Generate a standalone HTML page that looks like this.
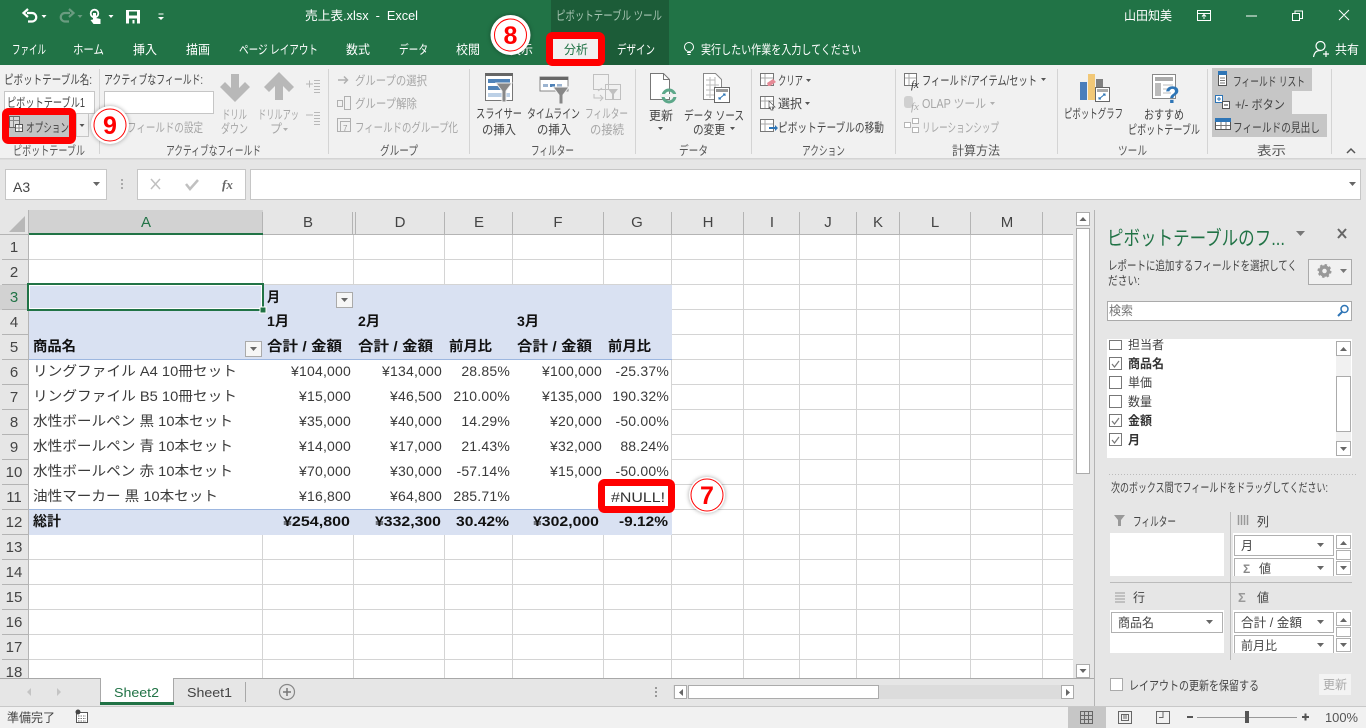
<!DOCTYPE html>
<html lang="ja"><head><meta charset="utf-8"><title>売上表.xlsx - Excel</title>
<style>
html,body{margin:0;padding:0;background:#e6e6e6;overflow:hidden;width:1366px;height:728px}
svg{display:block;position:absolute;left:0;top:0}
text{font-family:"Liberation Sans","Noto Sans CJK JP",sans-serif;font-size:12.5px;fill:#444;white-space:pre}
.w text{fill:#fff}.g text{fill:#a6a6a6}.d text{fill:#3a3a3a;font-size:14px}.n text{letter-spacing:.2px}.b text{fill:#111;font-size:14px;font-weight:bold}
.l text{fill:#555}.h text{fill:#444;font-size:15px;text-anchor:middle}
</style></head><body>
<svg width="1366" height="728" viewBox="0 0 1366 728">
<rect width="1366" height="728" fill="#e6e6e6"/>
<!-- title bar -->
<rect width="1366" height="65" fill="#217346"/>
<rect x="551" width="118" height="65" fill="#1c5c38"/>
<g fill="none" stroke="#fff" stroke-width="2.200">
<path d="M27 13h5a4 4 0 0 1 0 8.500h-4"/><path d="M28 9l-4.500 4 4.500 4"/>
<path d="M70 13h-5a4 4 0 0 0 0 8.500h4M69 9l4.500 4-4.500 4" stroke="#6a9c80"/>
<path d="M1197.500 10.500h13v10h-13zM1197.500 13.500h13M1204 19v-4M1202 16.500l2-2 2 2" stroke-width="1"/>
<path d="M1246 16h11M1292.500 13.500h7v7h-7zM1295 13.500v-2.500h7.500v7.500h-3M1339 10l10 10M1349 10l-10 10" stroke-width="1"/>
<circle cx="1320.500" cy="46" r="4.500" stroke-width="1.200"/><path d="M1313.500 57c1-5 3-6.500 7-6.500M1323 54h6M1326 51v6" stroke-width="1.200"/>
<circle cx="689" cy="47" r="4.500" stroke-width="1"/><path d="M687 52.500h4M687.500 54.500h3" stroke-width="1"/>
<circle cx="94.500" cy="13.500" r="3.800" stroke-width="1.800"/>
</g>
<path d="M93 13h3v5l4.500 1v5h-7l-3-4 2.500-.5z" fill="#fff"/>
<path d="M126 10h14v13.500h-14z" fill="#fff"/><path d="M129 11.500h8v4h-8zM129 18.500h8v5h-8z" fill="#217346"/><rect x="132.500" y="20" width="2" height="3.500" fill="#fff"/>
<g fill="#fff"><path d="M41.500 15h5l-2.500 3zM108.500 15h5l-2.500 3zM158 17h6l-3 3zM158.500 13.500h5v1h-5z"/></g>
<path d="M77.500 15h5l-2.500 3z" fill="#6a9c80"/>
<g class="w">
<text x="305" y="20" textLength="113" lengthAdjust="spacingAndGlyphs">売上表.xlsx  -  Excel</text>
<text x="1124" y="20" textLength="48" lengthAdjust="spacingAndGlyphs">山田知美</text>
<text x="12" y="54" textLength="34" lengthAdjust="spacingAndGlyphs">ファイル</text>
<text x="73" y="54" textLength="31" lengthAdjust="spacingAndGlyphs">ホーム</text>
<text x="133" y="54" textLength="24" lengthAdjust="spacingAndGlyphs">挿入</text>
<text x="186" y="54" textLength="24" lengthAdjust="spacingAndGlyphs">描画</text>
<text x="239" y="54" textLength="79" lengthAdjust="spacingAndGlyphs">ページ レイアウト</text>
<text x="346" y="54" textLength="24" lengthAdjust="spacingAndGlyphs">数式</text>
<text x="399" y="54" textLength="29" lengthAdjust="spacingAndGlyphs">データ</text>
<text x="456" y="54" textLength="24" lengthAdjust="spacingAndGlyphs">校閲</text>
<text x="509" y="54" textLength="24" lengthAdjust="spacingAndGlyphs">表示</text>
<text x="617" y="54" textLength="38" lengthAdjust="spacingAndGlyphs">デザイン</text>
<text x="701" y="54" textLength="160" lengthAdjust="spacingAndGlyphs">実行したい作業を入力してください</text>
<text x="1335" y="54" textLength="24" lengthAdjust="spacingAndGlyphs">共有</text>
</g>
<text x="556" y="20" textLength="106" lengthAdjust="spacingAndGlyphs" style="fill:#a9c6b4">ピボットテーブル ツール</text>
<!-- ribbon -->
<rect y="65" width="1366" height="93" fill="#f1f1f1"/>
<rect y="158" width="1366" height="1.500" fill="#d4d4d4"/>
<g fill="#d4d4d4"><rect x="99" y="69" width="1" height="85"/><rect x="328" y="69" width="1" height="85"/><rect x="469" y="69" width="1" height="85"/><rect x="635" y="69" width="1" height="85"/><rect x="751" y="69" width="1" height="85"/><rect x="895" y="69" width="1" height="85"/><rect x="1057" y="69" width="1" height="85"/><rect x="1207" y="69" width="1" height="85"/><rect x="1331" y="69" width="1" height="85"/></g>
<g class="l">
<text x="13" y="155" textLength="72" lengthAdjust="spacingAndGlyphs">ピボットテーブル</text>
<text x="166" y="155" textLength="95" lengthAdjust="spacingAndGlyphs">アクティブなフィールド</text>
<text x="380" y="155" textLength="38" lengthAdjust="spacingAndGlyphs">グループ</text>
<text x="531" y="155" textLength="43" lengthAdjust="spacingAndGlyphs">フィルター</text>
<text x="679" y="155" textLength="29" lengthAdjust="spacingAndGlyphs">データ</text>
<text x="802" y="155" textLength="43" lengthAdjust="spacingAndGlyphs">アクション</text>
<text x="952" y="155" textLength="48" lengthAdjust="spacingAndGlyphs">計算方法</text>
<text x="1118" y="155" textLength="29" lengthAdjust="spacingAndGlyphs">ツール</text>
<text x="1257" y="155" textLength="29" lengthAdjust="spacingAndGlyphs">表示</text>
</g>
<rect x="4.500" y="91.500" width="90" height="22" fill="#fff" stroke="#c6c6c6"/>
<rect x="104.500" y="91.500" width="109" height="22" fill="#fff" stroke="#c6c6c6"/>
<rect x="76.500" y="113.500" width="12" height="23" fill="#f1f1f1" stroke="#c6c6c6"/>
<path d="M79.500 124h5l-2.500 3z" fill="#555"/>
<text x="4" y="84" textLength="88" lengthAdjust="spacingAndGlyphs">ピボットテーブル名:</text>
<text x="104" y="84" textLength="99" lengthAdjust="spacingAndGlyphs">アクティブなフィールド:</text>
<text x="7" y="107" textLength="78" lengthAdjust="spacingAndGlyphs">ピボットテーブル1</text>
<!-- drill arrows -->
<g fill="#b8b8b8">
<path d="M231 74h8v14l6-6 5 5-15 15-15-15 5-5 6 6z"/>
<path d="M275 100h8v-14l6 6 5-5-15-15-15 15 5 5 6-6z"/>
</g>
<g fill="none" stroke="#b8b8b8" stroke-width="1"><path d="M306 84h7M309.500 80.500v7M314 80.500h6M314 83.500h6M314 86.500h6M314 89.500h6M314 92.500h6M306 115h7M314 112.500h6M314 115.500h6M314 118.500h6M314 121.500h6M314 124.500h6"/></g>
<g class="g">
<text x="127" y="132" textLength="76" lengthAdjust="spacingAndGlyphs">フィールドの設定</text>
<text x="222" y="119" textLength="25" lengthAdjust="spacingAndGlyphs">ドリル</text>
<text x="221" y="133" textLength="27" lengthAdjust="spacingAndGlyphs">ダウン</text>
<text x="258" y="119" textLength="41" lengthAdjust="spacingAndGlyphs">ドリルアッ</text>
<text x="270" y="133" textLength="12" lengthAdjust="spacingAndGlyphs">プ</text>
<text x="355" y="85" textLength="72" lengthAdjust="spacingAndGlyphs">グループの選択</text>
<text x="355" y="108" textLength="62" lengthAdjust="spacingAndGlyphs">グループ解除</text>
<text x="355" y="132" textLength="103" lengthAdjust="spacingAndGlyphs">フィールドのグループ化</text>
<text x="585" y="118" textLength="43" lengthAdjust="spacingAndGlyphs">フィルター</text>
<text x="590" y="134" textLength="34" lengthAdjust="spacingAndGlyphs">の接続</text>
<text x="922" y="108" textLength="64" lengthAdjust="spacingAndGlyphs">OLAP ツール</text>
<text x="922" y="132" textLength="77" lengthAdjust="spacingAndGlyphs">リレーションシップ</text>
</g>
<path d="M283 128h5l-2.500 3zM990 102h5l-2.500 3z" fill="#b0b0b0"/>
<!-- group icons -->
<g fill="none" stroke="#b0b0b0" stroke-width="1">
<path d="M338 80h9M344 76.500l3.500 3.500-3.500 3.500" stroke-width="1.500"/>
<rect x="337.500" y="100.500" width="5" height="6"/><rect x="344.500" y="96.500" width="6" height="13"/>
<rect x="337.500" y="118.500" width="13" height="13"/><rect x="340.500" y="121.500" width="10" height="10"/>
</g>
<text x="343" y="131" style="font-size:8px;fill:#999">7</text>
<!-- filter group -->
<text x="476" y="118" textLength="46" lengthAdjust="spacingAndGlyphs">スライサー</text>
<text x="482" y="134" textLength="34" lengthAdjust="spacingAndGlyphs">の挿入</text>
<text x="527" y="118" textLength="53" lengthAdjust="spacingAndGlyphs">タイムライン</text>
<text x="537" y="134" textLength="34" lengthAdjust="spacingAndGlyphs">の挿入</text>
<rect x="485.500" y="73.500" width="27" height="27" fill="#fff" stroke="#777"/><rect x="485" y="73" width="28" height="3" fill="#666"/>
<rect x="488" y="79" width="22" height="4" fill="#5083b8"/><rect x="488" y="86" width="14" height="4" fill="#5083b8"/><rect x="488" y="93" width="22" height="4" fill="#bcd0e6"/>
<path d="M496 83h16l-6 8v11h-4v-11z" fill="#888" stroke="#f1f1f1"/>
<rect x="540" y="77" width="28" height="14" fill="#fff" stroke="#888"/><rect x="540" y="77" width="28" height="3" fill="#666"/>
<rect x="543" y="84" width="5" height="3" fill="#9cb4d0"/><rect x="550" y="84" width="5" height="3" fill="#5083b8"/><rect x="557" y="84" width="5" height="3" fill="#9cb4d0"/>
<path d="M553 87h16l-6 8v9h-4v-9z" fill="#888" stroke="#f1f1f1"/>
<g fill="none" stroke="#c0c0c0"><rect x="593.500" y="74.500" width="15" height="15"/><rect x="605.500" y="84.500" width="15" height="15"/><path d="M594 94v4h8M600 95l3 3-3 3M598 91l4-3"/></g>
<path d="M608 89h10l-4 5v5h-2v-5z" fill="#c0c0c0"/>
<!-- data group -->
<path d="M650.500 73.500h13l6 6v20h-19z" fill="#fff" stroke="#777"/><path d="M663.500 73.500v6h6" fill="none" stroke="#777"/>
<circle cx="669" cy="96" r="6" fill="none" stroke="#5da88a" stroke-width="3"/><rect x="660" y="94" width="18" height="3" fill="#f1f1f1"/>
<path d="M703.500 73.500h12l6 6v20h-18z" fill="#fff" stroke="#888"/>
<path d="M706 80h9M706 85h13M706 90h13M706 95h13M710 77v21M715 77v21" stroke="#bbb" fill="none"/>
<rect x="714.500" y="87.500" width="15" height="15" fill="#fff" stroke="#666"/><rect x="716" y="89" width="12" height="3" fill="#999"/>
<path d="M719 99l6-5M723 94h2v2M719 97v2h2" stroke="#2e75b6" fill="none"/>
<text x="649" y="120" textLength="24" lengthAdjust="spacingAndGlyphs">更新</text>
<text x="684" y="120" textLength="60" lengthAdjust="spacingAndGlyphs">データ ソース</text>
<text x="693" y="134" textLength="32" lengthAdjust="spacingAndGlyphs">の変更</text>
<path d="M658 127h5l-2.500 3zM730 127h5l-2.500 3zM806 79h5l-2.500 3zM805 102h5l-2.500 3zM1041 78h5l-2.500 3z" fill="#555"/>
<!-- action -->
<g fill="#fff" stroke="#777"><rect x="760.500" y="73.500" width="13" height="12"/><rect x="760.500" y="96.500" width="13" height="12"/><rect x="760.500" y="119.500" width="13" height="12"/></g>
<path d="M761 78h12M765 74v11M761 101h12M765 97v11M761 124h12M765 120v11" stroke="#aaa"/>
<path d="M767 83l6-4 3 3-6 4h-2z" fill="#e58a96"/><path d="M769 101l6 6-3 0 1 3-2 0-1-3-1 2z" fill="#fff" stroke="#555" stroke-width=".7"/>
<path d="M769 127h6v-2l3 3-3 3v-2h-6z" fill="#2e75b6"/>
<text x="778" y="85" textLength="25" lengthAdjust="spacingAndGlyphs">クリア</text>
<text x="778" y="108" textLength="24" lengthAdjust="spacingAndGlyphs">選択</text>
<text x="778" y="132" textLength="106" lengthAdjust="spacingAndGlyphs">ピボットテーブルの移動</text>
<!-- calc -->
<rect x="904.500" y="73.500" width="12" height="12" fill="#fff" stroke="#777"/><path d="M905 78h11M909 74v11" stroke="#aaa"/>
<text x="911" y="88" style="font-family:'Liberation Serif',serif;font-style:italic;font-size:11px;fill:#333">fx</text>
<rect x="904" y="96" width="9" height="12" rx="3" fill="#d0d0d0"/>
<text x="911" y="110" style="font-family:'Liberation Serif',serif;font-style:italic;font-size:11px;fill:#aaa">fx</text>
<g fill="#fff" stroke="#b5b5b5"><rect x="904.500" y="122.500" width="6" height="5"/><rect x="912.500" y="118.500" width="6" height="5"/><rect x="912.500" y="127.500" width="6" height="5"/></g>
<text x="922" y="85" textLength="115" lengthAdjust="spacingAndGlyphs">フィールド/アイテム/セット</text>
<!-- tools -->
<rect x="1080" y="82" width="7" height="18" fill="#4a7ebb"/><rect x="1088" y="74" width="7" height="26" fill="#f2c877"/><rect x="1096" y="79" width="7" height="8" fill="#808080"/>
<rect x="1095.500" y="87.500" width="14" height="14" fill="#fff" stroke="#666"/><rect x="1097" y="89" width="11" height="3" fill="#aaa"/><path d="M1099 99l6-5M1103 94h2v2M1099 97v2h2" stroke="#2e75b6" fill="none"/>
<rect x="1152.500" y="74.500" width="23" height="24" fill="#fff" stroke="#888"/><rect x="1155" y="77" width="18" height="4" fill="#aaa"/><rect x="1155" y="83" width="6" height="13" fill="#bbb"/><path d="M1163 85h10M1163 89h8M1163 93h8" stroke="#bbb"/>
<text x="1165" y="103" style="font-size:24px;font-weight:bold;fill:#2e75b6">?</text>
<text x="1064" y="118" textLength="59" lengthAdjust="spacingAndGlyphs">ピボットグラフ</text>
<text x="1144" y="119" textLength="40" lengthAdjust="spacingAndGlyphs">おすすめ</text>
<text x="1128" y="134" textLength="72" lengthAdjust="spacingAndGlyphs">ピボットテーブル</text>
<!-- show -->
<rect x="1212" y="68" width="100" height="23" fill="#c6c6c6"/><rect x="1212" y="91" width="80" height="23" fill="#c6c6c6"/><rect x="1212" y="114" width="115" height="23" fill="#c6c6c6"/>
<rect x="1218.500" y="72.500" width="8" height="13" fill="#fff" stroke="#555"/><rect x="1218" y="71" width="9" height="4" fill="#2e75b6"/><path d="M1220 78h5M1220 80.500h5M1220 83h5" stroke="#777"/>
<rect x="1215.500" y="95.500" width="7" height="7" fill="#fff" stroke="#2e75b6"/><path d="M1217 99h4M1219 97v4" stroke="#2e75b6"/><rect x="1222.500" y="101.500" width="7" height="7" fill="#fff" stroke="#555"/><path d="M1224 105h4" stroke="#333"/>
<rect x="1215.500" y="118.500" width="15" height="11" fill="#fff" stroke="#555"/><rect x="1215" y="118" width="16" height="4" fill="#2e75b6"/><path d="M1216 125.500h14M1221 122v7M1226 122v7" stroke="#777"/>
<text x="1233" y="86" textLength="72" lengthAdjust="spacingAndGlyphs">フィールド リスト</text>
<text x="1235" y="109" textLength="50" lengthAdjust="spacingAndGlyphs">+/- ボタン</text>
<text x="1233" y="132" textLength="87" lengthAdjust="spacingAndGlyphs">フィールドの見出し</text>
<path d="M1347 153l4-4 4 4" fill="none" stroke="#555" stroke-width="1.500"/>
<!-- formula bar -->
<g fill="#fff" stroke="#c6c6c6"><rect x="5.500" y="169.500" width="101" height="30"/><rect x="137.500" y="169.500" width="108" height="30"/><rect x="250.500" y="169.500" width="1110" height="30"/></g>
<text x="13" y="192" style="font-size:14px">A3</text>
<path d="M93 182h7l-3.500 4zM1349 182h7l-3.500 4z" fill="#666"/>
<g fill="#aaa"><rect x="121" y="179" width="2" height="2"/><rect x="121" y="183" width="2" height="2"/><rect x="121" y="187" width="2" height="2"/></g>
<path d="M151 179l9 10M160 179l-9 10" stroke="#c0c0c0" stroke-width="1.500"/><path d="M186 184l4 5 8-9" stroke="#c0c0c0" stroke-width="2.500" fill="none"/>
<text x="222" y="189" style="font-family:'Liberation Serif',serif;font-style:italic;font-weight:bold;font-size:13px;fill:#666">fx</text>
<!-- sheet -->
<rect x="29" y="235" width="1044" height="443" fill="#fff"/>
<path fill="none" stroke="#d4d4d4" stroke-width="1" d="M29 259.500H1073M29 284.500H1073M672 309.500H1073M672 334.500H1073M672 359.500H1073M672 384.500H1073M672 409.500H1073M672 434.500H1073M672 459.500H1073M672 484.500H1073M672 509.500H1073M29 534.500H1073M29 559.500H1073M29 584.500H1073M29 609.500H1073M29 634.500H1073M29 659.500H1073
M262.500 235V285M353.500 235V285M444.500 235V285M512.500 235V285M603.500 235V285M671.500 235V678M743.500 235V678M799.500 235V678M856.500 235V678M899.500 235V678M970.500 235V678M1042.500 235V678
M262.500 535V678M353.500 535V678M444.500 535V678M512.500 535V678M603.500 535V678"/>
<rect x="29" y="285" width="643" height="75" fill="#d9e1f2"/><rect x="29" y="510" width="643" height="25" fill="#d9e1f2"/>
<path d="M29 359.500h643M29 509.500h643" stroke="#9db7e0" stroke-width="1"/>
<!-- headers -->
<rect x="0" y="210" width="1073" height="25" fill="#e6e6e6"/><rect x="0" y="235" width="29" height="443" fill="#e6e6e6"/>
<rect x="29" y="210" width="234" height="24" fill="#d2d2d2"/><rect x="0" y="285" width="28" height="25" fill="#d2d2d2"/>
<path d="M25 216v16h-16z" fill="#b8b8b8"/>
<path fill="none" stroke="#b4b4b4" d="M28.500 210V678M262.500 212V234M352.500 212V234M355.500 212V234M444.500 212V234M512.500 212V234M603.500 212V234M671.500 212V234M743.500 212V234M799.500 212V234M856.500 212V234M899.500 212V234M970.500 212V234M1042.500 212V234M0 234.500H28M263 234.500H1073M2 259.500H28M2 284.500H28M2 309.500H28M2 334.500H28M2 359.500H28M2 384.500H28M2 409.500H28M2 434.500H28M2 459.500H28M2 484.500H28M2 509.500H28M2 534.500H28M2 559.500H28M2 584.500H28M2 609.500H28M2 634.500H28M2 659.500H28"/>
<rect x="29" y="233" width="234" height="2" fill="#217346"/>
<g class="h">
<text x="146" y="227" style="fill:#217346">A</text><text x="308" y="227">B</text><text x="400" y="227">D</text><text x="479" y="227">E</text><text x="558" y="227">F</text><text x="637" y="227">G</text><text x="708" y="227">H</text><text x="772" y="227">I</text><text x="828" y="227">J</text><text x="878" y="227">K</text><text x="935" y="227">L</text><text x="1007" y="227">M</text>
<text x="14" y="252">1</text><text x="14" y="277">2</text><text x="14" y="302" style="fill:#217346">3</text><text x="14" y="327">4</text><text x="14" y="352">5</text><text x="14" y="377">6</text><text x="14" y="402">7</text><text x="14" y="427">8</text><text x="14" y="452">9</text><text x="14" y="477">10</text><text x="14" y="502">11</text><text x="14" y="527">12</text><text x="14" y="552">13</text><text x="14" y="577">14</text><text x="14" y="602">15</text><text x="14" y="627">16</text><text x="14" y="652">17</text><text x="14" y="677">18</text>
</g>
<!-- selection -->
<rect x="28" y="284" width="235" height="26" fill="none" stroke="#217346" stroke-width="2"/>
<rect x="29.500" y="285.500" width="232" height="23" fill="none" stroke="#fff"/>
<rect x="260" y="307" width="6" height="6" fill="#217346" stroke="#fff"/>
<!-- pivot text -->
<g class="b">
<text x="267" y="302" textLength="13" lengthAdjust="spacingAndGlyphs">月</text>
<text x="267" y="326" textLength="22" lengthAdjust="spacingAndGlyphs">1月</text>
<text x="358" y="326" textLength="22" lengthAdjust="spacingAndGlyphs">2月</text>
<text x="517" y="326" textLength="22" lengthAdjust="spacingAndGlyphs">3月</text>
<text x="33" y="351" textLength="43" lengthAdjust="spacingAndGlyphs">商品名</text>
<text x="267" y="351" textLength="75" lengthAdjust="spacingAndGlyphs">合計 / 金額</text>
<text x="358" y="351" textLength="75" lengthAdjust="spacingAndGlyphs">合計 / 金額</text>
<text x="449" y="351" textLength="43" lengthAdjust="spacingAndGlyphs">前月比</text>
<text x="517" y="351" textLength="75" lengthAdjust="spacingAndGlyphs">合計 / 金額</text>
<text x="608" y="351" textLength="43" lengthAdjust="spacingAndGlyphs">前月比</text>
<text x="33" y="526" textLength="28" lengthAdjust="spacingAndGlyphs">総計</text>
<text x="283" y="526" textLength="67" lengthAdjust="spacingAndGlyphs">¥254,800</text>
<text x="375" y="526" textLength="66" lengthAdjust="spacingAndGlyphs">¥332,300</text>
<text x="456" y="526" textLength="53" lengthAdjust="spacingAndGlyphs">30.42%</text>
<text x="533" y="526" textLength="66" lengthAdjust="spacingAndGlyphs">¥302,000</text>
<text x="619" y="526" textLength="49" lengthAdjust="spacingAndGlyphs">-9.12%</text>
</g>
<g fill="#f6f6f6" stroke="#aaa"><rect x="336.500" y="292.500" width="16" height="15"/><rect x="245.500" y="341.500" width="16" height="15"/></g>
<path d="M341 298h7l-3.500 4zM250 347h7l-3.500 4z" fill="#666"/>
<g class="d">
<text x="33" y="376" textLength="204" lengthAdjust="spacingAndGlyphs">リングファイル A4 10冊セット</text>
<text x="33" y="401" textLength="204" lengthAdjust="spacingAndGlyphs">リングファイル B5 10冊セット</text>
<text x="33" y="426" textLength="200" lengthAdjust="spacingAndGlyphs">水性ボールペン 黒 10本セット</text>
<text x="33" y="451" textLength="200" lengthAdjust="spacingAndGlyphs">水性ボールペン 青 10本セット</text>
<text x="33" y="476" textLength="200" lengthAdjust="spacingAndGlyphs">水性ボールペン 赤 10本セット</text>
<text x="33" y="501" textLength="185" lengthAdjust="spacingAndGlyphs">油性マーカー 黒 10本セット</text>
</g>
<g class="d n" text-anchor="end">
<text x="351" y="376">¥104,000</text><text x="351" y="401">¥15,000</text><text x="351" y="426">¥35,000</text><text x="351" y="451">¥14,000</text><text x="351" y="476">¥70,000</text><text x="351" y="501">¥16,800</text>
<text x="442" y="376">¥134,000</text><text x="442" y="401">¥46,500</text><text x="442" y="426">¥40,000</text><text x="442" y="451">¥17,000</text><text x="442" y="476">¥30,000</text><text x="442" y="501">¥64,800</text>
<text x="510" y="376">28.85%</text><text x="510" y="401">210.00%</text><text x="510" y="426">14.29%</text><text x="510" y="451">21.43%</text><text x="510" y="476">-57.14%</text><text x="510" y="501">285.71%</text>
<text x="602" y="376">¥100,000</text><text x="602" y="401">¥135,000</text><text x="602" y="426">¥20,000</text><text x="602" y="451">¥32,000</text><text x="602" y="476">¥15,000</text>
<text x="669" y="376">-25.37%</text><text x="669" y="401">190.32%</text><text x="669" y="426">-50.00%</text><text x="669" y="451">88.24%</text><text x="669" y="476">-50.00%</text>
</g>
<!-- vertical scrollbar -->
<rect x="1073" y="210" width="21" height="468" fill="#e6e6e6"/>
<g fill="#fff" stroke="#ababab"><rect x="1076.500" y="212.500" width="13" height="13"/><rect x="1076.500" y="228.500" width="13" height="245"/><rect x="1076.500" y="664.500" width="13" height="13"/></g>
<path d="M1079.500 221l3.500-4 3.500 4zM1079.500 669h7l-3.500 4z" fill="#666"/>
<!-- tabs -->
<rect y="678" width="1094" height="28" fill="#e6e6e6"/><rect y="678" width="1094" height="1" fill="#a8a8a8"/>
<rect x="100" y="678" width="74" height="27" fill="#fff"/><path d="M100.500 678v27M173.500 678v27" stroke="#a8a8a8"/><rect x="100" y="702" width="74" height="3" fill="#217346"/>
<text x="114" y="697" textLength="45" lengthAdjust="spacingAndGlyphs" style="font-size:13px;fill:#217346">Sheet2</text>
<text x="187" y="697" textLength="45" lengthAdjust="spacingAndGlyphs" style="font-size:13px;fill:#444">Sheet1</text>
<rect x="245" y="682" width="1" height="20" fill="#a8a8a8"/>
<circle cx="287" cy="692" r="7.500" fill="none" stroke="#888" stroke-width="1.200"/><path d="M283 692h8M287 688v8" stroke="#777" stroke-width="1.500"/>
<path d="M31 688l-4 4 4 4zM57 688l4 4-4 4z" fill="#c4c4c4"/>
<g fill="#999"><rect x="655" y="687" width="2" height="2"/><rect x="655" y="691" width="2" height="2"/><rect x="655" y="695" width="2" height="2"/></g>
<rect x="673" y="685" width="401" height="14" fill="#dcdcdc"/>
<g fill="#fff" stroke="#ababab"><rect x="674.500" y="685.500" width="12" height="13"/><rect x="688.500" y="685.500" width="190" height="13"/><rect x="1061.500" y="685.500" width="12" height="13"/></g>
<path d="M683 689l-4 3.500 4 3.500zM1066 689l4 3.500-4 3.500z" fill="#666"/>
<!-- status -->
<rect y="706" width="1366" height="22" fill="#f1f1f1"/><rect y="706" width="1366" height="1" fill="#c8c8c8"/>
<text x="7" y="722" textLength="48" lengthAdjust="spacingAndGlyphs">準備完了</text>
<rect x="76.500" y="712.500" width="11" height="10" fill="#fff" stroke="#555"/><circle cx="78" cy="712" r="2.500" fill="#444"/><path d="M78 716h8M78 718.500h8M78 721h8" stroke="#777" stroke-dasharray="1.500 1"/>
<rect x="1068" y="707" width="38" height="21" fill="#c6c6c6"/>
<path d="M1080.500 711.500h12v12h-12zM1080.500 715.500h12M1080.500 719.500h12M1084.500 711.500v12M1088.500 711.500v12" stroke="#666" fill="none"/>
<path d="M1118.500 711.500h13v12h-13zM1121.500 714.500h7v6h-7zM1123 716h4M1123 718h4" stroke="#666" fill="none"/>
<path d="M1156.500 711.500h13v12h-13zM1163 711.500v6h-4" stroke="#666" fill="none"/>
<rect x="1187" y="716" width="6" height="2" fill="#555"/><rect x="1197" y="717" width="100" height="1" fill="#999"/><rect x="1245" y="711" width="4" height="12" fill="#555"/>
<path d="M1302 717h7M1305.500 713.500v7" stroke="#555" stroke-width="2"/>
<text x="1325" y="722" textLength="33" lengthAdjust="spacingAndGlyphs" style="font-size:13px;fill:#555">100%</text>
<!-- pane -->
<rect x="1094" y="210" width="1" height="496" fill="#b4b4b4"/>
<text x="1107" y="245" textLength="178" lengthAdjust="spacingAndGlyphs" style="font-size:20px;fill:#217346">ピボットテーブルのフ...</text>
<path d="M1296 231h9l-4.500 5z" fill="#777"/><path d="M1338 229l8 9M1346 229l-8 9" stroke="#666" stroke-width="2"/>
<text x="1108" y="270" textLength="189" lengthAdjust="spacingAndGlyphs">レポートに追加するフィールドを選択してく</text>
<text x="1108" y="285" textLength="32" lengthAdjust="spacingAndGlyphs">ださい:</text>
<rect x="1308.500" y="259.500" width="43" height="25" fill="#f1f1f1" stroke="#aaa"/>
<circle cx="1324.500" cy="271" r="4" fill="none" stroke="#999" stroke-width="3.500"/><circle cx="1324.500" cy="271" r="6" fill="none" stroke="#999" stroke-width="2" stroke-dasharray="2.400 2.300"/><path d="M1340 269h7l-3.500 4z" fill="#777"/>
<rect x="1107.500" y="301.500" width="244" height="19" fill="#fff" stroke="#aaa"/>
<text x="1109" y="315" textLength="24" lengthAdjust="spacingAndGlyphs" style="fill:#777">検索</text>
<circle cx="1344.500" cy="309" r="3.500" fill="none" stroke="#2e75b6" stroke-width="1.500"/><path d="M1342 312l-4 4" stroke="#2e75b6" stroke-width="2"/>
<rect x="1107" y="339" width="245" height="119" fill="#fff"/>
<svg x="1107" y="339" width="226" height="119" viewBox="1107 339 226 119">
<g fill="#fff" stroke="#777"><rect x="1109.500" y="340.500" width="12" height="9"/><rect x="1109.500" y="357.500" width="12" height="12"/><rect x="1109.500" y="376.500" width="12" height="12"/><rect x="1109.500" y="395.500" width="12" height="12"/><rect x="1109.500" y="414.500" width="12" height="12"/><rect x="1109.500" y="433.500" width="12" height="12"/></g>
<text x="1128" y="349" textLength="36" lengthAdjust="spacingAndGlyphs">担当者</text>
</svg>
<path d="M1112 364l2.500 3 4.500-6M1112 421l2.500 3 4.500-6M1112 440l2.500 3 4.500-6" fill="none" stroke="#777" stroke-width="1.200"/>
<text x="1128" y="368" textLength="36" lengthAdjust="spacingAndGlyphs" style="font-weight:bold;fill:#333">商品名</text><text x="1128" y="425" textLength="24" lengthAdjust="spacingAndGlyphs" style="font-weight:bold;fill:#333">金額</text><text x="1128" y="444" textLength="12" lengthAdjust="spacingAndGlyphs" style="font-weight:bold;fill:#333">月</text>
<text x="1128" y="387" textLength="24" lengthAdjust="spacingAndGlyphs">単価</text><text x="1128" y="406" textLength="24" lengthAdjust="spacingAndGlyphs">数量</text>
<rect x="1336" y="341" width="15" height="115" fill="#f1f1f1"/>
<g fill="#fff" stroke="#ababab"><rect x="1336.500" y="341.500" width="14" height="14"/><rect x="1336.500" y="376.500" width="14" height="55"/><rect x="1336.500" y="441.500" width="14" height="14"/></g>
<path d="M1340 351l3.500-4 3.500 4zM1340 447h7l-3.500 4z" fill="#666"/>
<path d="M1109 474.500H1356" stroke="#bbb" stroke-dasharray="1 2"/>
<text x="1111" y="492" textLength="217" lengthAdjust="spacingAndGlyphs">次のボックス間でフィールドをドラッグしてください:</text>
<path d="M1114 515h11l-4 5v6h-3v-6z" fill="#999"/>
<text x="1133" y="526" textLength="43" lengthAdjust="spacingAndGlyphs">フィルター</text>
<path d="M1238.500 515v10M1241.500 515v10M1244.500 515v10M1247.500 515v10" stroke="#999" stroke-width="1.500"/>
<text x="1257" y="526" textLength="12" lengthAdjust="spacingAndGlyphs">列</text>
<path d="M1115 593h10M1115 596h10M1115 599h10M1115 602h10" stroke="#999"/>
<text x="1133" y="602" textLength="12" lengthAdjust="spacingAndGlyphs">行</text>
<text x="1238" y="602" style="font-size:13px;fill:#999;font-weight:bold">Σ</text>
<text x="1257" y="602" textLength="12" lengthAdjust="spacingAndGlyphs">値</text>
<rect x="1230" y="512" width="1" height="148" fill="#bbb"/><rect x="1110" y="582" width="242" height="1" fill="#bbb"/>
<g fill="#fff"><rect x="1110" y="533" width="114" height="43"/><rect x="1233" y="533" width="119" height="43"/><rect x="1110" y="610" width="114" height="43"/><rect x="1233" y="610" width="119" height="43"/></g>
<g fill="#fff" stroke="#b0b0b0"><rect x="1234.500" y="535.500" width="99" height="20"/><path d="M1234.500 576v-17.500h99V576M1234.500 653v-17.500h99V653"/><rect x="1111.500" y="612.500" width="111" height="20"/><rect x="1234.500" y="612.500" width="99" height="20"/>
<rect x="1336.500" y="535.500" width="14" height="13"/><rect x="1336.500" y="550.500" width="14" height="9"/><rect x="1336.500" y="561.500" width="14" height="13"/><rect x="1336.500" y="612.500" width="14" height="13"/><rect x="1336.500" y="627.500" width="14" height="9"/><rect x="1336.500" y="638.500" width="14" height="13"/></g>
<path d="M1340 545l3.500-4 3.500 4zM1340 566h7l-3.500 4zM1340 622l3.500-4 3.500 4zM1340 643h7l-3.500 4zM1317 543h7l-3.500 4zM1317 566h7l-3.500 4zM1317 620h7l-3.500 4zM1317 643h7l-3.500 4zM1206 620h7l-3.500 4z" fill="#666"/>
<text x="1241" y="550" textLength="12" lengthAdjust="spacingAndGlyphs">月</text>
<text x="1243" y="573" style="font-size:12px;fill:#888;font-weight:bold">Σ</text><text x="1259" y="573" textLength="12" lengthAdjust="spacingAndGlyphs">値</text>
<text x="1118" y="627" textLength="36" lengthAdjust="spacingAndGlyphs">商品名</text>
<text x="1241" y="627" textLength="61" lengthAdjust="spacingAndGlyphs">合計 / 金額</text>
<text x="1241" y="650" textLength="36" lengthAdjust="spacingAndGlyphs">前月比</text>
<rect x="1110.500" y="678.500" width="12" height="12" fill="#fff" stroke="#aaa"/>
<text x="1129" y="690" textLength="130" lengthAdjust="spacingAndGlyphs">レイアウトの更新を保留する</text>
<rect x="1319" y="674" width="32" height="21" fill="#f3f3f3"/>
<text x="1323" y="689" textLength="24" lengthAdjust="spacingAndGlyphs" style="fill:#aaa">更新</text>
<!-- annotations -->
<rect x="5.500" y="111.500" width="67" height="29" rx="3" fill="#c3c3c3" stroke="#f00" stroke-width="7"/>
<rect x="9.500" y="116.500" width="10" height="11" fill="#d8d8d8" stroke="#666"/><path d="M10 120.500h9M13.500 117v10" stroke="#888"/><rect x="15.500" y="124.500" width="7" height="7" fill="#fff" stroke="#555"/><path d="M16 128h6M19 125v6" stroke="#888"/>
<text x="26" y="132" textLength="43" lengthAdjust="spacingAndGlyphs">オプション</text>
<rect x="549.500" y="35.500" width="52" height="27" rx="3" fill="#f1f1f1" stroke="#f00" stroke-width="7"/>
<text x="564" y="54" textLength="24" lengthAdjust="spacingAndGlyphs" style="fill:#217346">分析</text>
<rect x="601.500" y="482.500" width="70" height="27" rx="3" fill="#fff" stroke="#f00" stroke-width="7"/>
<text x="665" y="502" text-anchor="end" textLength="54" lengthAdjust="spacingAndGlyphs" style="font-size:14px;fill:#333">#NULL!</text>
<g fill="#fff" style="filter:drop-shadow(0 0 2px rgba(0,0,0,.35))"><circle cx="510.500" cy="35" r="20"/><circle cx="110" cy="125" r="19"/><circle cx="707" cy="495" r="18"/></g>
<g fill="none" stroke="#f00" stroke-width="1"><circle cx="510.500" cy="35" r="16"/><circle cx="110" cy="125" r="16"/><circle cx="707" cy="495" r="16"/></g>
<g style="text-anchor:middle"><text x="510.500" y="44" style="font-size:25px;font-weight:bold;fill:#f00">8</text><text x="110" y="134" style="font-size:25px;font-weight:bold;fill:#f00">9</text><text x="707" y="504" style="font-size:25px;font-weight:bold;fill:#f00">7</text></g>
</svg>
</body></html>
